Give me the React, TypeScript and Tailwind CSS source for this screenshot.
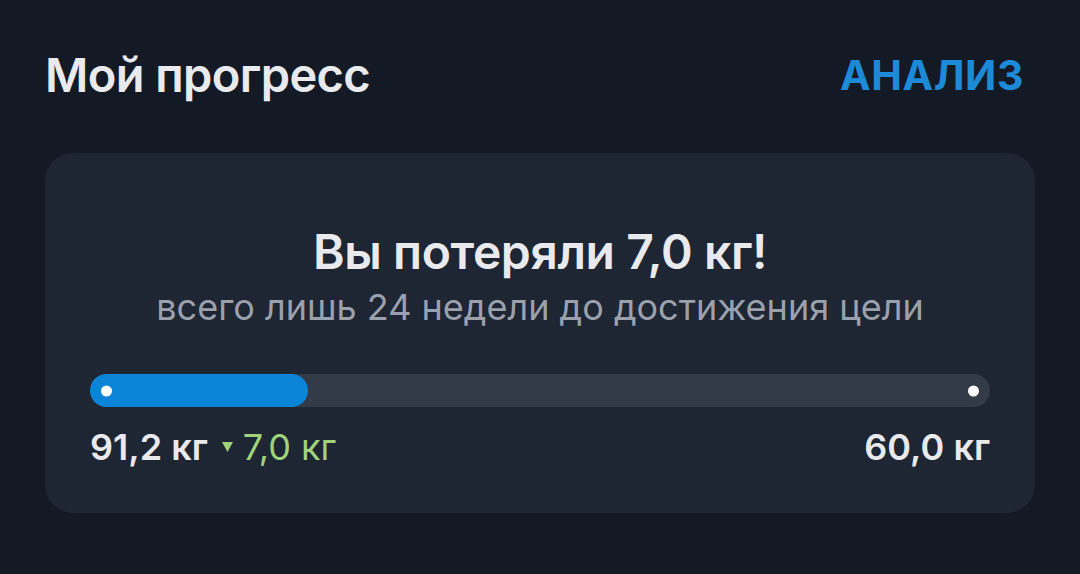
import React from "react";

const start = 91.2;
const goal = 60.0;
const lost = 7.0;

function fmt(v: number) {
  return v.toFixed(1).replace(".", ",");
}

export default function App() {
  const pct = Math.max((lost / (start - goal)) * 100, 24.2);

  return (
    <div
      className="min-h-[574px] w-[1080px] bg-[#131a26] px-[45px] pt-[47px]"
      style={{ fontFamily: "Inter, 'Noto Sans', sans-serif" }}
    >
      <div className="flex h-[56px] items-center justify-between pr-[11px]">
        <h2 className="text-[47px] font-semibold leading-[56px] text-[#e8eaed] tracking-[-0.6px]">Мой прогресс</h2>
        <button className="text-[41px] font-bold leading-[56px] text-[#1d8ad8] tracking-[0.6px]">АНАЛИЗ</button>
      </div>

      <div className="mt-[50px] rounded-[28px] bg-[#1e2533] px-[45px] pt-[71px] pb-[44px]">
        <div className="text-center">
          <h3 className="text-[48px] font-semibold leading-[56px] text-[#e8eaed] tracking-[-0.4px]">
            Вы потеряли {fmt(lost)} кг!
          </h3>
          <p className="mt-[5px] text-[36px] leading-[44px] text-[#9aa1ad]">
            всего лишь 24 недели до достижения цели
          </p>
        </div>

        <div className="relative mt-[45px] h-[33px] rounded-full bg-[#333a48]">
          <div
            className="h-full rounded-full bg-[#0a84d6]"
            style={{ width: `${pct}%` }}
          />
          <span className="absolute left-[11px] top-1/2 h-[11px] w-[11px] -translate-y-1/2 rounded-full bg-white" />
          <span className="absolute right-[11px] top-1/2 h-[11px] w-[11px] -translate-y-1/2 rounded-full bg-white" />
        </div>

        <div className="mt-[18px] flex items-center justify-between text-[36px] leading-[44px]">
          <div className="flex items-center">
            <span className="font-semibold text-[#e8eaed]">{fmt(start)} кг</span>
            <svg className="ml-[14px] mr-[10px]" width="11" height="10" viewBox="0 0 11 10">
              <path d="M0 0h11L5.5 10z" fill="#9fd27a" />
            </svg>
            <span className="text-[#9fd27a]">{fmt(lost)} кг</span>
          </div>
          <span className="font-semibold text-[#e8eaed]">{fmt(goal)} кг</span>
        </div>
      </div>
    </div>
  );
}
